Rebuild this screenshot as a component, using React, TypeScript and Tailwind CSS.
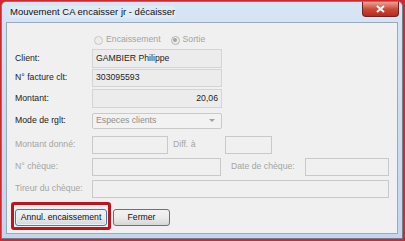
import React from "react";

const font = { fontFamily: '"Liberation Sans", Arial, sans-serif' };

function Field({ w, children, ro, right }: { w: string; children?: React.ReactNode; ro?: boolean; right?: boolean }) {
  return (
    <div
      className={`${w} h-full flex items-center px-[3px] border ${ro ? "border-[#d4d4d4] bg-[#ececec] text-[#1e1e1e]" : "border-[#c9c9c9] bg-[#f0f0f0]"} ${right ? "justify-end" : ""}`}
    >
      {children}
    </div>
  );
}

export default function App() {
  return (
    <div className="w-[405px] h-[241px] bg-[#d5262c] pt-[1px] pl-[1px] pr-[2px] pb-[2px]" style={font}>
      <div className="w-full h-full rounded-t-[5px] border border-[#707f92] bg-gradient-to-b from-[#d7e5f4] to-[#c3d6ec] flex flex-col pl-[4px] pr-[4px] pb-[4px]">
        <div className="h-[20px] flex items-start relative">
          <div className="mt-[4px] ml-[3px] text-[9.5px] text-[#111] leading-[12px] px-[1px] bg-[#e4eef9]/60 rounded">
            Mouvement CA encaisser jr - décaisser
          </div>
          <div className="ml-auto mr-[-1px] w-[37px] h-[15px] rounded-b-[4px] border border-t-0 border-[#6b2323] bg-gradient-to-b from-[#e5a194] via-[#cc4a36] to-[#b8291b] flex items-center justify-center">
            <svg width="9" height="8" viewBox="0 0 9 8">
              <path d="M1 1 L8 7 M8 1 L1 7" stroke="#fff" strokeWidth="2" />
            </svg>
          </div>
        </div>
        <div className="flex-1 border border-[#9aa9bb] bg-[#f0f0f0] flex flex-col pl-[8px] pt-[10px] text-[8.7px] text-[#222]">
          <div className="h-[14px] flex items-center pl-[79px] text-[#a3a3a3]">
            <span className="w-[9px] h-[9px] rounded-full border border-[#c8c8c8] bg-[#ececec] mr-[3px]" />
            <span>Encaissement</span>
            <span className="ml-[10px] w-[9px] h-[9px] rounded-full border border-[#b5b5b5] bg-[#ececec] mr-[3px] flex items-center justify-center">
              <span className="w-[4px] h-[4px] rounded-full bg-[#a5a5a5]" />
            </span>
            <span>Sortie</span>
          </div>
          <div className="mt-[2px] h-[19px] flex items-center">
            <div className="w-[77px]">Client:</div>
            <Field w="w-[130px]" ro>GAMBIER Philippe</Field>
          </div>
          <div className="mt-[1px] h-[18px] flex items-center">
            <div className="w-[77px]">N° facture clt:</div>
            <Field w="w-[130px]" ro>303095593</Field>
          </div>
          <div className="mt-[2px] h-[19px] flex items-center">
            <div className="w-[77px]">Montant:</div>
            <Field w="w-[130px]" ro right>20,06</Field>
          </div>
          <div className="mt-[5px] h-[16px] flex items-center">
            <div className="w-[77px]">Mode de rglt:</div>
            <div className="w-[130px] h-full flex items-center px-[3px] border border-[#c9c9c9] rounded-[2px] bg-[#f2f2f2] text-[#8f8f8f]">
              <span>Especes clients</span>
              <svg className="ml-auto mr-[3px]" width="6" height="4" viewBox="0 0 6 4">
                <path d="M0 0 H6 L3 3 Z" fill="#a0a0a0" />
              </svg>
            </div>
          </div>
          <div className="mt-[7px] h-[18px] flex items-center text-[#a5a5a5]">
            <div className="w-[77px]">Montant donné:</div>
            <Field w="w-[76px]" />
            <div className="ml-[5px] w-[52px]">Diff. à</div>
            <Field w="w-[47px]" />
          </div>
          <div className="mt-[4px] h-[18px] flex items-center text-[#a5a5a5]">
            <div className="w-[77px]">N° chèque:</div>
            <Field w="w-[129px]" />
            <div className="ml-[10px] w-[74px]">Date de chèque:</div>
            <Field w="w-[84px]" />
          </div>
          <div className="mt-[4px] h-[18px] flex items-center text-[#a5a5a5]">
            <div className="w-[77px]">Tireur du chèque:</div>
            <Field w="w-[297px]" />
          </div>
          <div className="mt-[4px] flex items-start ml-[-4px]">
            <div className="border-[3px] border-[#c0141c] rounded-[3px] pt-[4px] pb-[1px] px-[1px]">
              <div className="w-[92px] h-[17px] rounded-[3px] border border-[#3c7fb1] bg-gradient-to-b from-[#f2f2f2] via-[#ebebeb] to-[#d6d6d6] flex items-center justify-center text-[#111] shadow-[inset_0_0_0_1px_#e5f4fc]">
                Annul. encaissement
              </div>
            </div>
            <div className="ml-[2px] mt-[7px] w-[57px] h-[17px] rounded-[3px] border border-[#707070] bg-gradient-to-b from-[#f2f2f2] via-[#ebebeb] to-[#d6d6d6] flex items-center justify-center text-[#111]">
              Fermer
            </div>
          </div>
        </div>
      </div>
    </div>
  );
}
